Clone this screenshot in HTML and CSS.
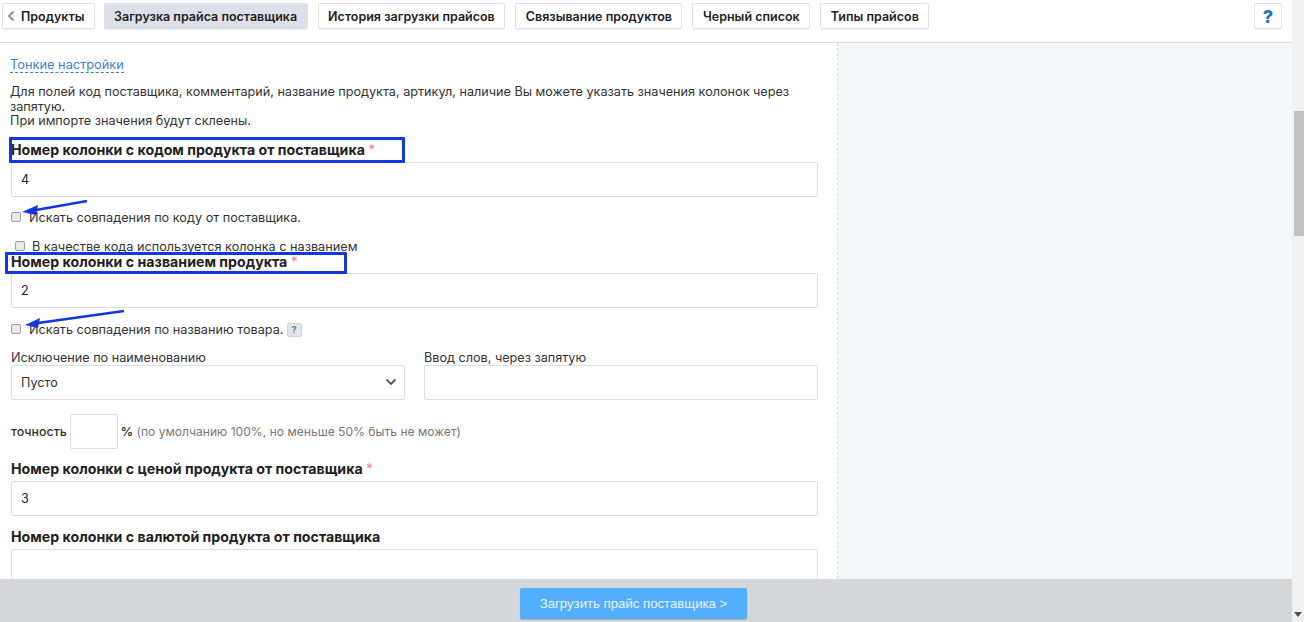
FILE: index.html
```html
<!DOCTYPE html>
<html lang="ru">
<head>
  <meta charset="UTF-8" />
  <title>Загрузка прайса поставщика</title>
  <link rel="stylesheet" href="styles.css">
</head>
<body>
  <div class="app">
    <div class="page">
      <div class="toolbar">
        <a class="tab first-tab"><svg class="back" width="8" height="12" viewBox="0 0 8 12"><path d="M6.5 1.5 2 6l4.5 4.5" fill="none" stroke="#6f8fb5" stroke-width="1.8"/></svg>Продукты</a>
        <a class="tab active">Загрузка прайса поставщика</a>
        <a class="tab">История загрузки прайсов</a>
        <a class="tab">Связывание продуктов</a>
        <a class="tab">Черный список</a>
        <a class="tab">Типы прайсов</a>
        <a class="tab help">?</a>
      </div>

      <div class="body">
        <div class="content">
          <a class="fine-link">Тонкие настройки</a>
          <p class="hint">Для полей код поставщика, комментарий, название продукта, артикул, наличие Вы можете указать значения колонок через запятую.<br>При импорте значения будут склеены.</p>

          <label class="field-label first">Номер колонки с кодом продукта от поставщика <span class="req">*</span></label>
          <input class="text-input" type="text" value="4">
          <div class="check-row"><input type="checkbox"><span>Искать совпадения по коду от поставщика.</span></div>
          <div class="check-row inner"><input type="checkbox"><span>В качестве кода используется колонка с названием</span></div>

          <label class="field-label second">Номер колонки с названием продукта <span class="req">*</span></label>
          <input class="text-input" type="text" value="2">
          <div class="check-row tall"><input type="checkbox"><span>Искать совпадения по названию товара.</span><span class="tip">?</span></div>

          <div class="two-cols">
            <div>
              <label class="small-label">Исключение по наименованию</label>
              <div class="select">Пусто
                <svg width="12" height="8" viewBox="0 0 12 8"><path d="M1.5 1.5 6 6l4.5-4.5" fill="none" stroke="#555" stroke-width="1.8"/></svg>
              </div>
            </div>
            <div>
              <label class="small-label">Ввод слов, через запятую</label>
              <input class="text-input" type="text">
            </div>
          </div>

          <div class="accuracy">
            <span class="acc-label">точность</span>
            <input class="acc-input" type="text">
            <span class="acc-note"><b>%</b> (по умолчанию 100%, но меньше 50% быть не может)</span>
          </div>

          <label class="field-label">Номер колонки с ценой продукта от поставщика <span class="req">*</span></label>
          <input class="text-input" type="text" value="3">

          <label class="field-label wide">Номер колонки с валютой продукта от поставщика</label>
          <input class="text-input" type="text">
        </div>
        <div class="side"></div>
      </div>

      <div class="footer">
        <button class="submit">Загрузить прайс поставщика &gt;</button>
      </div>

      <!-- пометки поверх скриншота -->
      <div class="mark mark-one"></div>
      <div class="mark mark-two"></div>
      <svg class="arrows" width="140" height="340" viewBox="0 0 140 340">
        <path d="M87 201 36 210" stroke="#1237dc" stroke-width="2.4" fill="none"/>
        <path d="M22 212 38 205 36 215Z" fill="#1237dc"/>
        <path d="M124 311 38 323" stroke="#1237dc" stroke-width="2.4" fill="none"/>
        <path d="M25 325 40 318 38 328Z" fill="#1237dc"/>
      </svg>
    </div>

    <div class="scrollbar">
      <div class="scroll-track"><div class="scroll-thumb"></div></div>
      <svg class="scroll-down" width="8" height="5" viewBox="0 0 8 5"><path d="M0 0h8L4 5Z" fill="#505050"/></svg>
    </div>
  </div>
</body>
</html>
```

FILE: styles.css
```css
html, body {
  margin: 0;
  height: 100%;
  overflow: hidden;
}

body {
  font-family: Inter, Roboto, 'Liberation Sans', sans-serif;
  font-size: 12.65px;
  color: #333;
  background: #fff;
}

.app {
  display: flex;
  height: 622px;
}

.page {
  position: relative;
  flex: 1;
  min-width: 0;
  display: flex;
  flex-direction: column;
}

/* toolbar */
.toolbar {
  flex: none;
  display: flex;
  gap: 10px;
  height: 43px;
  box-sizing: border-box;
  padding: 3px 0 0 2px;
  border-bottom: 1px solid #d6d8e0;
}

.tab {
  display: flex;
  align-items: center;
  height: 26px;
  padding: 0 9.5px;
  box-sizing: border-box;
  background: #fff;
  border: 1px solid #dfe1e5;
  border-radius: 2px;
  box-shadow: 0 1px 1px rgba(0,0,0,0.06);
  font-size: 12.5px;
  font-weight: 600;
  color: #222;
  white-space: nowrap;
}

.tab.first-tab {
  padding: 0 9px 0 4px;
  margin-right: -1px;
}

.tab.active {
  background: #dce0e8;
  border-color: #dce0e8;
}

.back {
  margin-right: 6px;
}

.tab.help {
  margin-left: auto;
  margin-right: 10px;
  width: 28px;
  justify-content: center;
  padding: 0;
  font-size: 18px;
  font-weight: 800;
  color: #2a70c8;
}

/* main area */
.body {
  flex: 1;
  min-height: 0;
  display: flex;
  overflow: hidden;
}

.content {
  width: 838px;
  flex: none;
  box-sizing: border-box;
  padding: 14px 19px 0 11px;
  border-right: 1px dashed #dcdcdc;
}

.side {
  flex: 1;
  background: #f5f6f8;
}

.fine-link {
  display: inline-block;
  margin-left: -1px;
  color: #3f7fc9;
  font-size: 12.8px;
  line-height: 15px;
  border-bottom: 1px dashed #3f7fc9;
}

.hint {
  margin: 12px 0 0 -1px;
  line-height: 14.5px;
}

.field-label {
  display: block;
  margin: 11px 0 3px;
  font-size: 14.2px;
  font-weight: 700;
  line-height: 18px;
  color: #222;
}

.field-label.first {
  margin-top: 12px;
}

.field-label.second {
  margin: -1px 0 2px;
}

.field-label.wide {
  margin-top: 12px;
}

.req {
  color: #ee8a82;
  font-weight: 400;
}

.text-input {
  display: block;
  width: 100%;
  height: 35px;
  box-sizing: border-box;
  padding: 0 9px;
  border: 1px solid #dcdee2;
  border-radius: 2px;
  background: #fff;
  font-family: inherit;
  font-size: 12.65px;
  color: #222;
  outline: none;
}

.check-row {
  display: flex;
  align-items: center;
  height: 16px;
  margin-top: 13px;
  font-size: 12.7px;
}

.check-row.tall {
  margin-top: 14px;
}

.check-row input {
  appearance: none;
  width: 10px;
  height: 10px;
  box-sizing: border-box;
  margin: -2px 8px 0 0;
  flex: none;
  background: #e9e9e9;
  border: 1px solid #9c9c9c;
  border-radius: 2px;
}

.check-row.inner {
  margin-top: 14px;
  padding-left: 4px;
  height: 14px;
}

.check-row.inner input {
  margin-right: 7px;
}

.tip {
  display: inline-block;
  width: 15px;
  height: 14px;
  box-sizing: border-box;
  margin-left: 3px;
  background: #dfe7ea;
  border: 1px solid #cfd6d9;
  border-radius: 2px;
  font-size: 9px;
  font-weight: 700;
  line-height: 12px;
  text-align: center;
  color: #5a7f8c;
}

.two-cols {
  display: grid;
  grid-template-columns: 1fr 1fr;
  gap: 19px;
  margin-top: 13px;
}

.small-label {
  display: block;
  line-height: 14px;
}

.select {
  display: flex;
  align-items: center;
  justify-content: space-between;
  height: 35px;
  box-sizing: border-box;
  padding: 0 7px 0 9px;
  border: 1px solid #dcdee2;
  border-radius: 2px;
}

.accuracy {
  display: flex;
  align-items: center;
  margin-top: 14px;
}

.acc-label {
  font-size: 12.4px;
  font-weight: 500;
}

.acc-input {
  width: 48px;
  height: 35px;
  box-sizing: border-box;
  margin: 0 3px;
  border: 1px solid #dcdee2;
  border-radius: 2px;
  outline: none;
}

.acc-note {
  color: #777;
  font-size: 12.1px;
}

.acc-note b {
  color: #333;
}

/* footer */
.footer {
  flex: none;
  height: 43px;
  box-sizing: border-box;
  padding-top: 9px;
  background: #d4d7da;
  display: flex;
  justify-content: center;
  align-items: flex-start;
}

.submit {
  width: 227px;
  height: 31px;
  margin-right: 25px;
  background: #54aeff;
  border: none;
  border-radius: 2px;
  box-shadow: 0 1px 1px rgba(0,0,0,0.2);
  color: #e6f3ff;
  font-family: 'Liberation Sans', sans-serif;
  font-size: 13.2px;
}

/* annotations over the screenshot */
.mark {
  position: absolute;
  border: 3px solid #1237dc;
  box-sizing: border-box;
  border-radius: 1px;
}

.mark-one {
  left: 9px;
  top: 137px;
  width: 396px;
  height: 26px;
}

.mark-two {
  left: 5px;
  top: 252px;
  width: 342px;
  height: 22px;
}

.arrows {
  position: absolute;
  left: 0;
  top: 0;
  pointer-events: none;
}

/* scrollbar */
.scrollbar {
  width: 12px;
  flex: none;
  background: #f1f1f1;
  display: flex;
  flex-direction: column;
}

.scroll-track {
  flex: 1;
  padding: 111px 0 0 2px;
}

.scroll-thumb {
  width: 10px;
  height: 125px;
  background: #c1c1c1;
}

.scroll-down {
  margin: 0 0 5px 2px;
}
```
